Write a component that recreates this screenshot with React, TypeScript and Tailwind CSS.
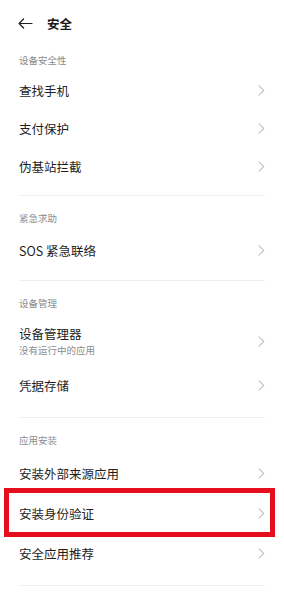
import React from "react";

const font = { fontFamily: '"Noto Sans CJK SC", "Noto Sans", sans-serif' };

function Chevron() {
  return (
    <svg width="7" height="11" viewBox="0 0 7 11" className="shrink-0">
      <path d="M1 0.8 L5.8 5.5 L1 10.2" fill="none" stroke="#c2c2c2" strokeWidth="1.1" strokeLinecap="round" strokeLinejoin="round" />
    </svg>
  );
}

function Row({ title, sub, h, highlight }: { title: string; sub?: string; h: string; highlight?: boolean }) {
  return (
    <div className={`relative flex items-center justify-between pl-[19px] pr-[19px] ${h}`}>
      <div className="flex flex-col">
        <span className="text-[12.5px] leading-[17px] text-[#1e1e1e]">{title}</span>
        {sub && <span className="mt-[2px] text-[9.5px] leading-[13px] text-[#8c8c8c]">{sub}</span>}
      </div>
      <Chevron />
      {highlight && (
        <div className="pointer-events-none absolute left-[4px] right-[9px] top-[-5px] bottom-[-4px] border-[5px] border-[#e60d1f]" />
      )}
    </div>
  );
}

function Header({ text, first }: { text: string; first?: boolean }) {
  return (
    <div className={`pl-[19px] ${first ? "pt-[7px]" : "pt-[16px]"} pb-[7px]`}>
      <div className="text-[9.5px] leading-[12px] text-[#8c8c8c]">{text}</div>
    </div>
  );
}

function Divider() {
  return <div className="mx-[19px] h-px bg-[#ededed]" />;
}

export default function App() {
  return (
    <div className="h-[600px] w-[284px] overflow-hidden bg-white" style={font}>
      <div className="flex h-[47px] items-center">
        <div className="ml-[18px]">
          <svg width="15" height="11" viewBox="0 0 15 11">
            <path d="M14 5.5 H1.2 M5.6 1 L1.1 5.5 L5.6 10" fill="none" stroke="#1e1e1e" strokeWidth="1.2" strokeLinecap="round" strokeLinejoin="round" />
          </svg>
        </div>
        <span className="ml-[14px] text-[12.5px] font-bold leading-[17px] text-[#1a1a1a]">安全</span>
      </div>

      <div className="-mt-[2px]">
        <div className="pl-[19px] pt-[9px] pb-[5px]">
          <div className="text-[9.5px] leading-[12px] text-[#8c8c8c]">设备安全性</div>
        </div>
        <Row title="查找手机" h="h-[38px]" />
        <Row title="支付保护" h="h-[38px]" />
        <Row title="伪基站拦截" h="h-[38px]" />
        <div className="h-[10px]" />
      </div>
      <Divider />

      <Header text="紧急求助" />
      <Row title="SOS 紧急联络" h="h-[38px]" />
      <div className="h-[11px]" />
      <Divider />

      <Header text="设备管理" />
      <Row title="设备管理器" sub="没有运行中的应用" h="h-[50px]" />
      <Row title="凭据存储" h="h-[38px]" />
      <div className="h-[13px]" />
      <Divider />

      <Header text="应用安装" />
      <Row title="安装外部来源应用" h="h-[40px]" />
      <Row title="安装身份验证" h="h-[40px]" highlight />
      <Row title="安全应用推荐" h="h-[40px]" />
      <div className="h-[12px]" />
      <Divider />
    </div>
  );
}
